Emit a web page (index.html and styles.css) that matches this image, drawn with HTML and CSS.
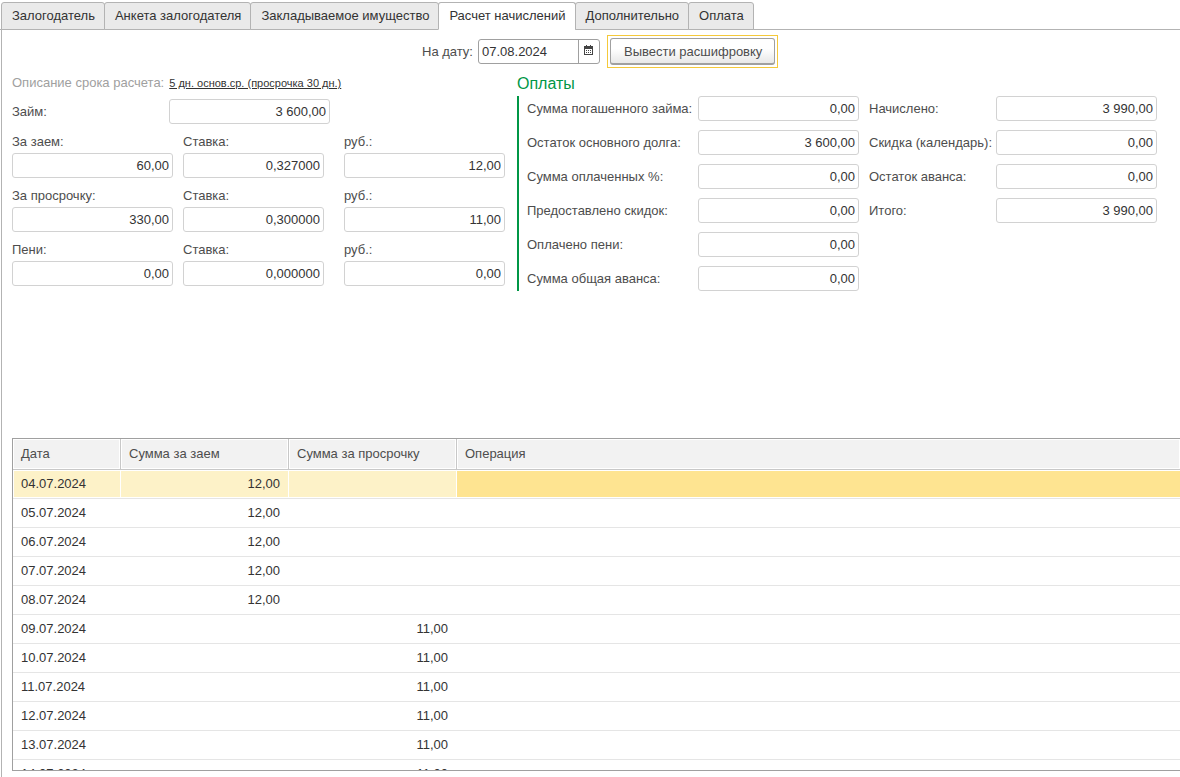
FILE: index.html
```html
<!DOCTYPE html>
<html lang="ru">
<head>
<meta charset="utf-8">
<title>Расчет начислений</title>
<link rel="stylesheet" href="styles.css">
</head>
<body>
<nav class="tabs" role="tablist">
  <button class="tab" role="tab">Залогодатель</button>
  <button class="tab" role="tab">Анкета залогодателя</button>
  <button class="tab" role="tab">Закладываемое имущество</button>
  <button class="tab tab-active" role="tab" aria-selected="true">Расчет начислений</button>
  <button class="tab" role="tab">Дополнительно</button>
  <button class="tab" role="tab">Оплата</button>
</nav>
<main class="panel">
  <div class="toolbar">
    <label for="date">На дату:</label>
    <div class="date-box">
      <input id="date" class="date-input" type="text" value="07.08.2024">
      <button class="date-button" aria-label="Выбрать дату">
        <svg width="9" height="10" viewBox="0 0 9 10" shape-rendering="crispEdges" aria-hidden="true">
          <path fill="#444" d="M0 1h9v9H0z"/>
          <path fill="#fff" d="M1 4h7v5H1z"/>
          <path fill="#444" d="M2 0h1v2H2zM6 0h1v2H6zM2 5h1v1H2zM4 5h1v1H4zM6 5h1v1H6zM2 7h1v1H2zM4 7h1v1H4zM6 7h1v1H6z"/>
        </svg>
      </button>
    </div>
    <div class="focus-ring"><button class="action">Вывести расшифровку</button></div>
  </div>

  <div class="columns">
    <section class="left">
      <div class="term"><span class="muted">Описание срока расчета:</span><a class="term-link" href="#">5 дн. основ.ср. (просрочка 30 дн.)</a></div>
      <div class="loan"><label for="loan">Займ:</label><input id="loan" class="field" value="3 600,00"></div>
      <div class="rates">
        <div class="stack"><label for="a1">За заем:</label><input id="a1" class="field" value="60,00"></div>
        <div class="stack"><label for="a2">Ставка:</label><input id="a2" class="field" value="0,327000"></div>
        <div class="stack rub"><label for="a3">руб.:</label><input id="a3" class="field" value="12,00"></div>
        <div class="stack"><label for="b1">За просрочку:</label><input id="b1" class="field" value="330,00"></div>
        <div class="stack"><label for="b2">Ставка:</label><input id="b2" class="field" value="0,300000"></div>
        <div class="stack rub"><label for="b3">руб.:</label><input id="b3" class="field" value="11,00"></div>
        <div class="stack"><label for="c1">Пени:</label><input id="c1" class="field" value="0,00"></div>
        <div class="stack"><label for="c2">Ставка:</label><input id="c2" class="field" value="0,000000"></div>
        <div class="stack rub"><label for="c3">руб.:</label><input id="c3" class="field" value="0,00"></div>
      </div>
    </section>

    <section class="payments">
      <h2 class="heading">Оплаты</h2>
      <div class="payments-body">
        <div class="pairs pairs-paid">
          <label for="p1">Сумма погашенного займа:</label><input id="p1" class="field" value="0,00">
          <label for="p2">Остаток основного долга:</label><input id="p2" class="field" value="3 600,00">
          <label for="p3">Сумма оплаченных %:</label><input id="p3" class="field" value="0,00">
          <label for="p4">Предоставлено скидок:</label><input id="p4" class="field" value="0,00">
          <label for="p5">Оплачено пени:</label><input id="p5" class="field" value="0,00">
          <label for="p6">Сумма общая аванса:</label><input id="p6" class="field" value="0,00">
        </div>
        <div class="pairs pairs-total">
          <label for="t1">Начислено:</label><input id="t1" class="field" value="3 990,00">
          <label for="t2">Скидка (календарь):</label><input id="t2" class="field" value="0,00">
          <label for="t3">Остаток аванса:</label><input id="t3" class="field" value="0,00">
          <label for="t4">Итого:</label><input id="t4" class="field" value="3 990,00">
        </div>
      </div>
    </section>
  </div>

  <div class="grid">
    <table class="table">
      <colgroup><col class="col-date"><col class="col-sum"><col class="col-sum"><col></colgroup>
      <thead><tr><th>Дата</th><th>Сумма за заем</th><th>Сумма за просрочку</th><th>Операция</th></tr></thead>
      <tbody>
        <tr class="selected"><td>04.07.2024</td><td class="num">12,00</td><td class="num"></td><td class="current"></td></tr>
        <tr><td>05.07.2024</td><td class="num">12,00</td><td class="num"></td><td></td></tr>
        <tr><td>06.07.2024</td><td class="num">12,00</td><td class="num"></td><td></td></tr>
        <tr><td>07.07.2024</td><td class="num">12,00</td><td class="num"></td><td></td></tr>
        <tr><td>08.07.2024</td><td class="num">12,00</td><td class="num"></td><td></td></tr>
        <tr><td>09.07.2024</td><td class="num"></td><td class="num">11,00</td><td></td></tr>
        <tr><td>10.07.2024</td><td class="num"></td><td class="num">11,00</td><td></td></tr>
        <tr><td>11.07.2024</td><td class="num"></td><td class="num">11,00</td><td></td></tr>
        <tr><td>12.07.2024</td><td class="num"></td><td class="num">11,00</td><td></td></tr>
        <tr><td>13.07.2024</td><td class="num"></td><td class="num">11,00</td><td></td></tr>
        <tr><td>14.07.2024</td><td class="num"></td><td class="num">11,00</td><td></td></tr>
      </tbody>
    </table>
  </div>
</main>
</body>
</html>
```

FILE: styles.css
```css
* { box-sizing: border-box; }

body {
  margin: 0;
  height: 100vh;
  display: flex;
  flex-direction: column;
  overflow: hidden;
  background: #fff;
  color: #4d4d4d;
  font: 13px/16px "Liberation Sans", Arial, sans-serif;
}

input, button { font: inherit; margin: 0; }

.tabs {
  display: flex;
  flex: none;
  padding: 2px 0 0 1px;
  box-shadow: inset 0 -1px #b3b3b3;
}

.tab {
  height: 28px;
  padding: 0 9px 0 10px;
  margin-right: -1px;
  border: 1px solid #b3b3b3;
  border-radius: 3px 3px 0 0;
  background: #eaeaea;
  color: #333;
  white-space: nowrap;
}

.tab-active { background: #fff; border-bottom-color: #fff; }

.panel {
  flex: 1;
  min-height: 0;
  display: flex;
  flex-direction: column;
  margin-left: 1px;
  padding: 5px 0 6px 10px;
  border-left: 1px solid #b3b3b3;
}

.toolbar {
  display: flex;
  align-items: center;
  padding-left: 410px;
  gap: 5px;
}

.date-box {
  display: flex;
  width: 122px;
  height: 25px;
  border: 1px solid #a0a0a0;
  border-radius: 3px;
}

.date-input {
  flex: 1;
  min-width: 0;
  padding: 0 3px;
  border: 0;
  background: none;
  color: #333;
}

.date-button {
  display: flex;
  align-items: center;
  justify-content: center;
  width: 21px;
  padding: 0 0 3px;
  border: 0;
  border-left: 1px solid #a0a0a0;
  background: none;
}

.focus-ring { padding: 2px; border: 1px solid #f5c93a; margin-left: 2px; }

.action {
  display: block;
  height: 27px;
  padding: 1px 12px 0 13px;
  border: 1px solid #a0a0a0;
  border-bottom-width: 2px;
  border-radius: 3px;
  background: linear-gradient(#fff 40%, #e8e8e8);
  color: #4d4d4d;
}

.columns { display: flex; gap: 12px; padding-top: 7px; }

.left { width: 493px; flex: none; }

.term { display: flex; align-items: center; gap: 5px; height: 16px; }

.muted { color: #a0a0a0; }

.term-link { color: #333; font-size: 11px; }

.loan {
  display: grid;
  grid-template-columns: 157px 161px;
  align-items: center;
  padding: 8px 0 10px;
}

.field {
  width: 100%;
  height: 25px;
  padding: 0 3px;
  border: 1px solid #d2d2d2;
  border-radius: 3px;
  background: #fff;
  color: #333;
  text-align: right;
}

.rates {
  display: grid;
  grid-template-columns: 161px 141px 171px;
  column-gap: 10px;
  row-gap: 10px;
}

.stack { display: flex; flex-direction: column; gap: 3px; }

.rub { padding-left: 10px; }

.heading {
  margin: 0;
  height: 21px;
  color: #009646;
  font-size: 16px;
  font-weight: normal;
  line-height: 18px;
}

.payments-body {
  display: flex;
  gap: 10px;
  align-items: flex-start;
  padding-left: 8px;
  border-left: 2px solid #009646;
}

.pairs { display: grid; row-gap: 9px; align-items: center; }

.pairs-paid { grid-template-columns: 171px 161px; }

.pairs-total { grid-template-columns: 127px 161px; }

.grid {
  flex: 1;
  min-height: 0;
  margin-top: 147px;
  overflow: hidden;
  border: solid #a0a0a0;
  border-width: 1px 0 1px 1px;
}

.table {
  width: 100%;
  table-layout: fixed;
  border-collapse: separate;
  border-spacing: 0;
}

.col-date { width: 107px; }
.col-sum { width: 168px; }

th {
  height: 31px;
  padding: 0 8px;
  border: solid #c8c8c8;
  border-width: 0 0 1px 1px;
  background: #f2f2f2;
  box-shadow: inset 0 0 0 1px #fff;
  font-weight: normal;
  text-align: left;
}

th:first-child { border-left: 0; }

td {
  height: 29px;
  padding: 6px 8px 0;
  border-bottom: 1px solid #e5e5e5;
  color: #333;
  vertical-align: top;
}

.num { text-align: right; }

.selected td {
  background: #fdf2c8;
  box-shadow: inset 0 1px #fff, inset 0 -1px #fff, inset 1px 0 #fff;
}

.selected .current { background: #fee491; }
```
